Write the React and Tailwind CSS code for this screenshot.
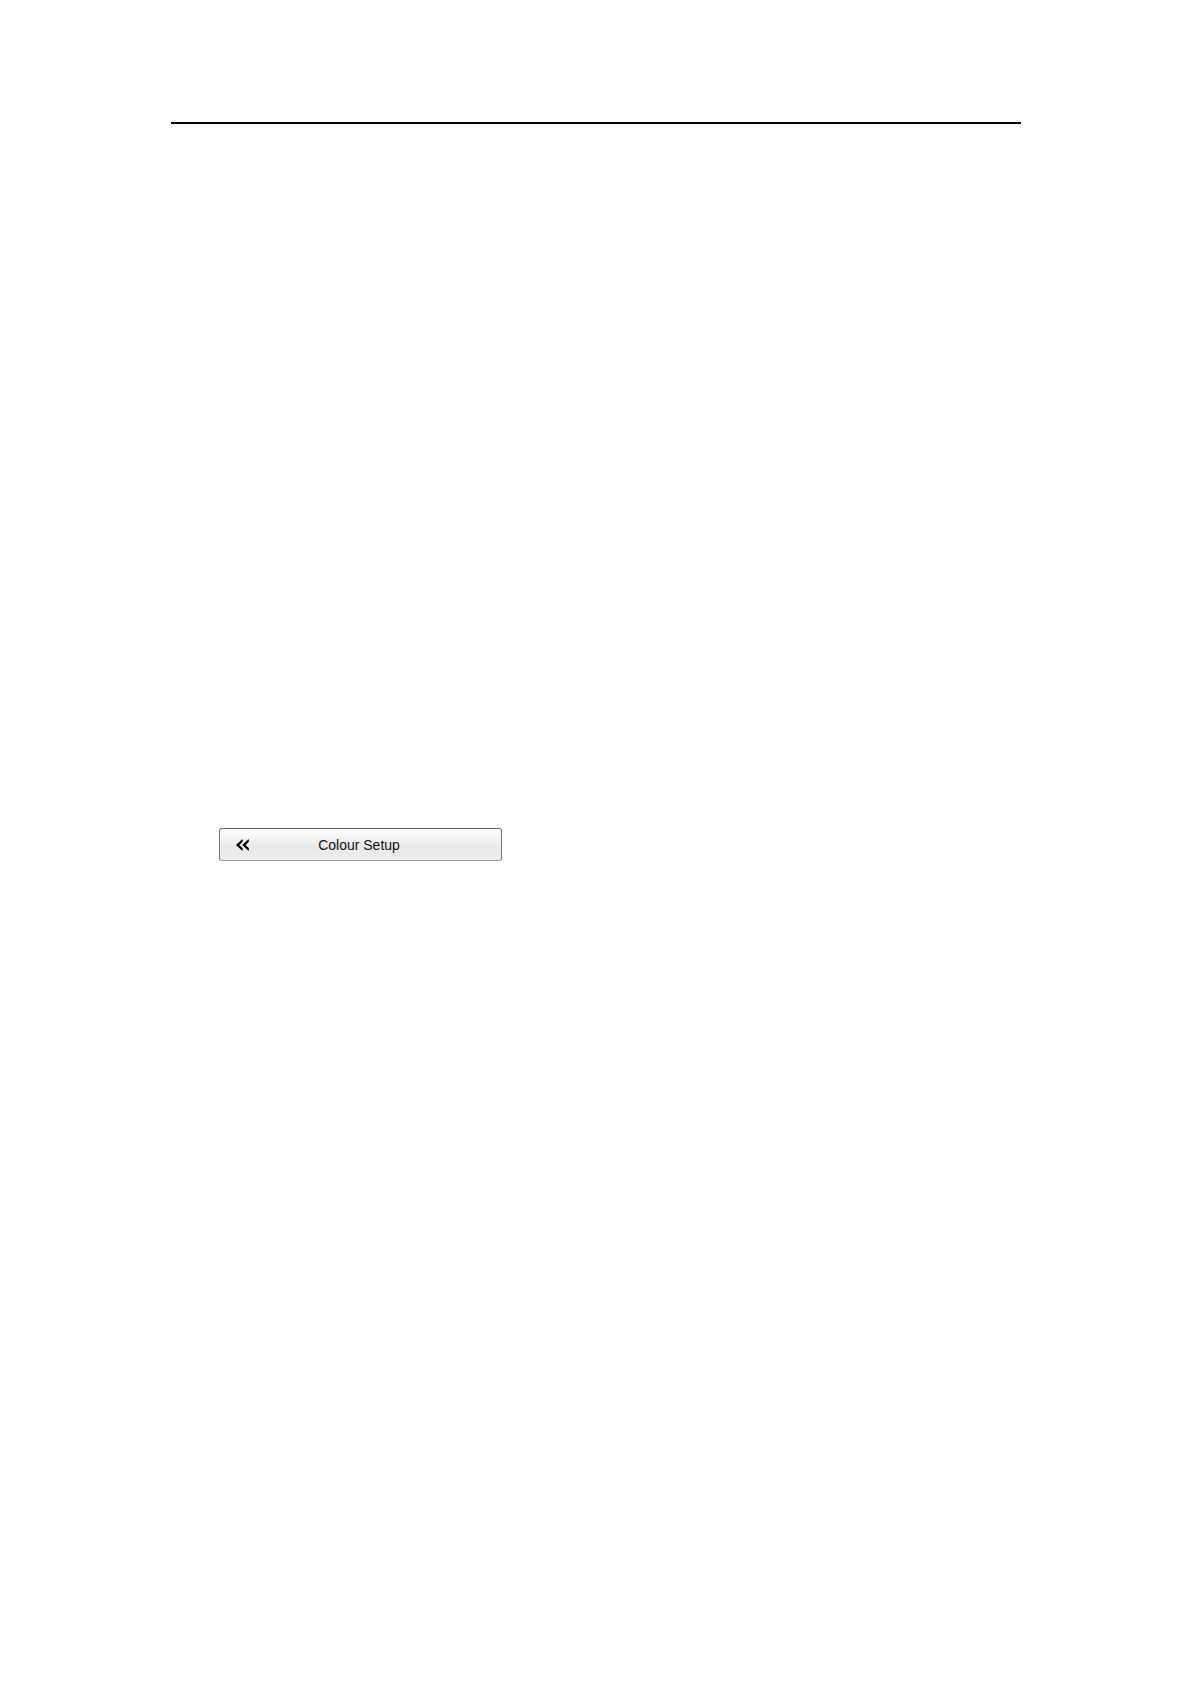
import React from 'react';

const BackArrows = () => (
  <svg className="h-3 w-[13px] shrink-0" viewBox="0 0 13 12" fill="#000000" aria-hidden="true">
    <path d="M6.6 0 V2.8 L3.4 6 L6.6 9.2 V12 L0.4 6.6 V5.4 Z" />
    <path d="M12.8 0 V2.8 L9.6 6 L12.8 9.2 V12 L6.6 6.6 V5.4 Z" />
  </svg>
);

const MenuButton = ({ label }) => (
  <button
    type="button"
    className="flex h-[33px] w-full max-w-[283px] items-center rounded-[3px] border border-[#777777] border-t-[#666666] border-b-[#a0a0a0] bg-linear-to-b from-white via-[#e9e9e9] via-60% to-[#eeeeee] px-4 text-sm text-[#111111]"
  >
    <BackArrows />
    <span className="grow pr-4 text-center">{label}</span>
  </button>
);

export default function App() {
  return (
    <main className="min-h-screen bg-white pt-[122px] pr-[170px] pl-[171px] font-['Liberation_Sans',Arial,sans-serif]">
      <hr className="border-0 border-t-2 border-black" />
      <section className="pt-[704px] pl-12">
        <MenuButton label="Colour Setup" />
      </section>
    </main>
  );
}
